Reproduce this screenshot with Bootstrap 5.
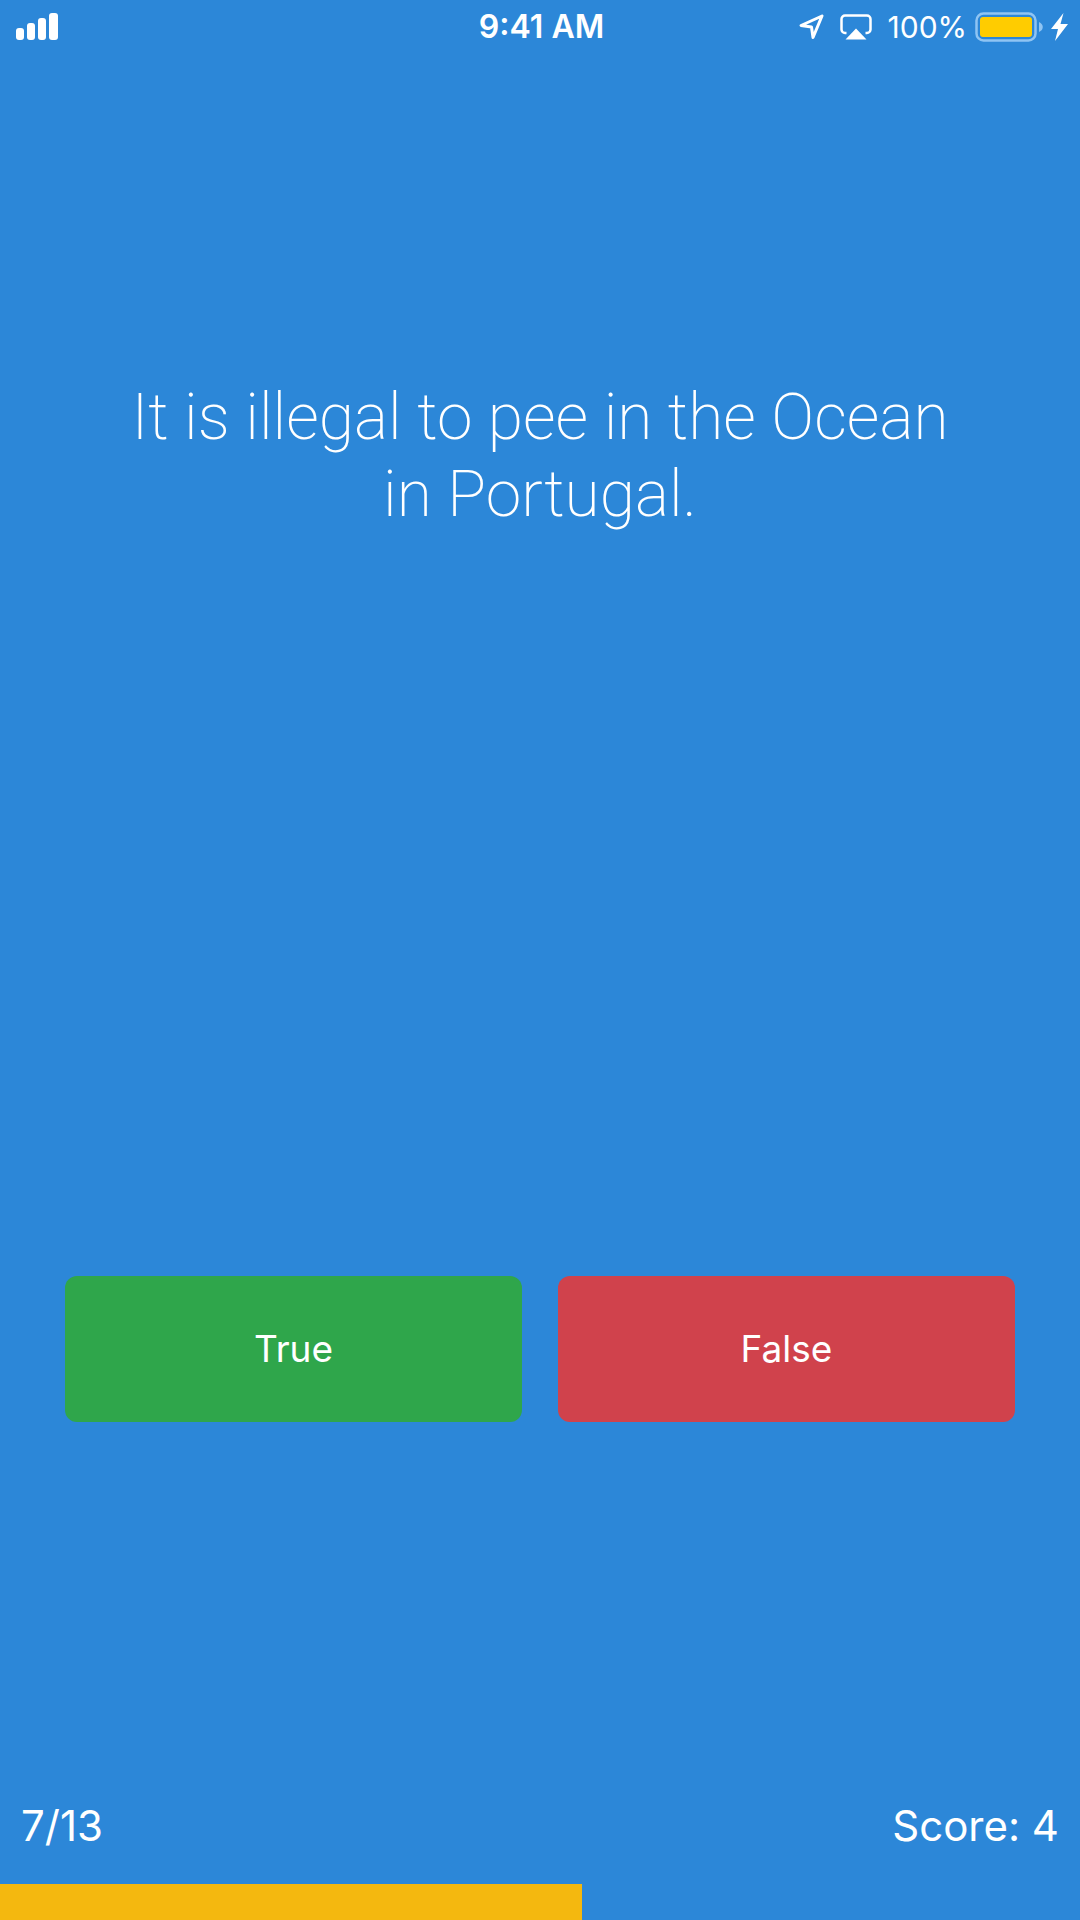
<!DOCTYPE html>
<html lang="en">
<head>
<meta charset="utf-8">
<meta name="viewport" content="width=device-width, initial-scale=1">
<title>True or False Quiz</title>
<link href="https://cdn.jsdelivr.net/npm/bootstrap@5.3.0/dist/css/bootstrap.min.css" rel="stylesheet">
<script src="https://cdn.jsdelivr.net/npm/bootstrap@5.3.0/dist/js/bootstrap.bundle.min.js" defer></script>
<style>
  body {
    background: #2c87d8;
    color: #fff;
    font-family: Inter, "Liberation Sans", sans-serif;
  }
  .status-bar {
    height: 54px;
    padding: 0 12px 0 15px;
    font-size: 30px;
    line-height: 54px;
  }
  .status-side { flex: 1 1 0; }
  .status-time { font-size: 32px; font-weight: 600; }
  .quiz-main { padding: 325px 65px 379px; }
  .question-text {
    font-family: Roboto, "Liberation Sans", sans-serif;
    font-size: 64px;
    font-weight: 200;
    line-height: 77px;
    padding: 0 48px;
  }
  .answers { gap: 36px; }
  .answer-btn {
    height: 146px;
    border: 0;
    border-radius: 12px;
    color: #fff;
    font-size: 37px;
  }
  .answer-true { --bs-btn-bg: #2fa64b; --bs-btn-hover-bg: #288f40; --bs-btn-active-bg: #227a37; }
  .answer-false { --bs-btn-bg: #d0424c; --bs-btn-hover-bg: #b93842; --bs-btn-active-bg: #a02f38; }
  .score-row {
    padding: 0 21px 33px;
    font-size: 42px;
    line-height: 50px;
  }
  .quiz-progress {
    height: 36px;
    border-radius: 0;
    background: transparent;
  }
  .quiz-progress .progress-bar { background: #f4b80f; }
</style>
</head>
<body>
<div class="d-flex flex-column min-vh-100">
  <header class="status-bar d-flex align-items-center">
    <div class="status-side d-flex align-items-center">
      <svg width="44" height="28" viewBox="0 0 44 28" fill="#fff" role="img" aria-label="Signal strength">
        <rect x="1" y="15" width="8" height="12" rx="3"/>
        <rect x="12" y="10" width="8" height="17" rx="3"/>
        <rect x="23" y="5" width="8" height="22" rx="3"/>
        <rect x="34" y="0" width="9" height="27" rx="3"/>
      </svg>
    </div>
    <time class="status-time">9:41 AM</time>
    <div class="status-side d-flex align-items-center justify-content-end">
      <svg class="me-3" width="25" height="26" viewBox="0 0 25 26" fill="none" stroke="#fff" stroke-width="3" stroke-linejoin="round" role="img" aria-label="Location">
        <path d="M23 2 2 11.500l10.500 1.500L14 23.500z"/>
      </svg>
      <svg class="me-3" width="32" height="26" viewBox="0 0 32 26" role="img" aria-label="Screen mirroring">
        <path d="M6.500 19H5a3.500 3.500 0 0 1-3.500-3.500V5A3.500 3.500 0 0 1 5 1.500h22A3.500 3.500 0 0 1 30.500 5v10.500A3.500 3.500 0 0 1 27 19h-1.500" fill="none" stroke="#fff" stroke-width="2.500"/>
        <path d="M16 14.500 26.500 25.500h-21z" fill="#fff"/>
      </svg>
      <span class="me-2">100%</span>
      <svg class="me-2" width="68" height="30" viewBox="0 0 68 30" role="img" aria-label="Battery charging">
        <rect x="1.500" y="1.500" width="59" height="27" rx="7" fill="none" stroke="#8fc4f3" stroke-width="2.500"/>
        <rect x="5" y="5" width="52" height="20" rx="3" fill="#ffcc00"/>
        <path d="M64 10c5 2 5 8 0 10z" fill="#8fc4f3"/>
      </svg>
      <svg width="17" height="28" viewBox="0 0 17 28" fill="#fff" aria-hidden="true">
        <path d="M12.500 0 0 16h7L4 28 17 11H9.500z"/>
      </svg>
    </div>
  </header>

  <main class="quiz-main flex-grow-1 d-flex flex-column justify-content-between">
    <h1 class="question-text text-center m-0">It is illegal to pee in the Ocean in Portugal.</h1>
    <div class="answers d-flex">
      <button type="button" class="btn answer-btn answer-true flex-fill w-50">True</button>
      <button type="button" class="btn answer-btn answer-false flex-fill w-50">False</button>
    </div>
  </main>

  <footer>
    <div class="score-row d-flex justify-content-between">
      <span>7/13</span>
      <span>Score: 4</span>
    </div>
    <div class="progress quiz-progress" role="progressbar" aria-label="Quiz progress" aria-valuenow="7" aria-valuemin="0" aria-valuemax="13">
      <div class="progress-bar" style="width: 53.85%"></div>
    </div>
  </footer>
</div>
</body>
</html>
